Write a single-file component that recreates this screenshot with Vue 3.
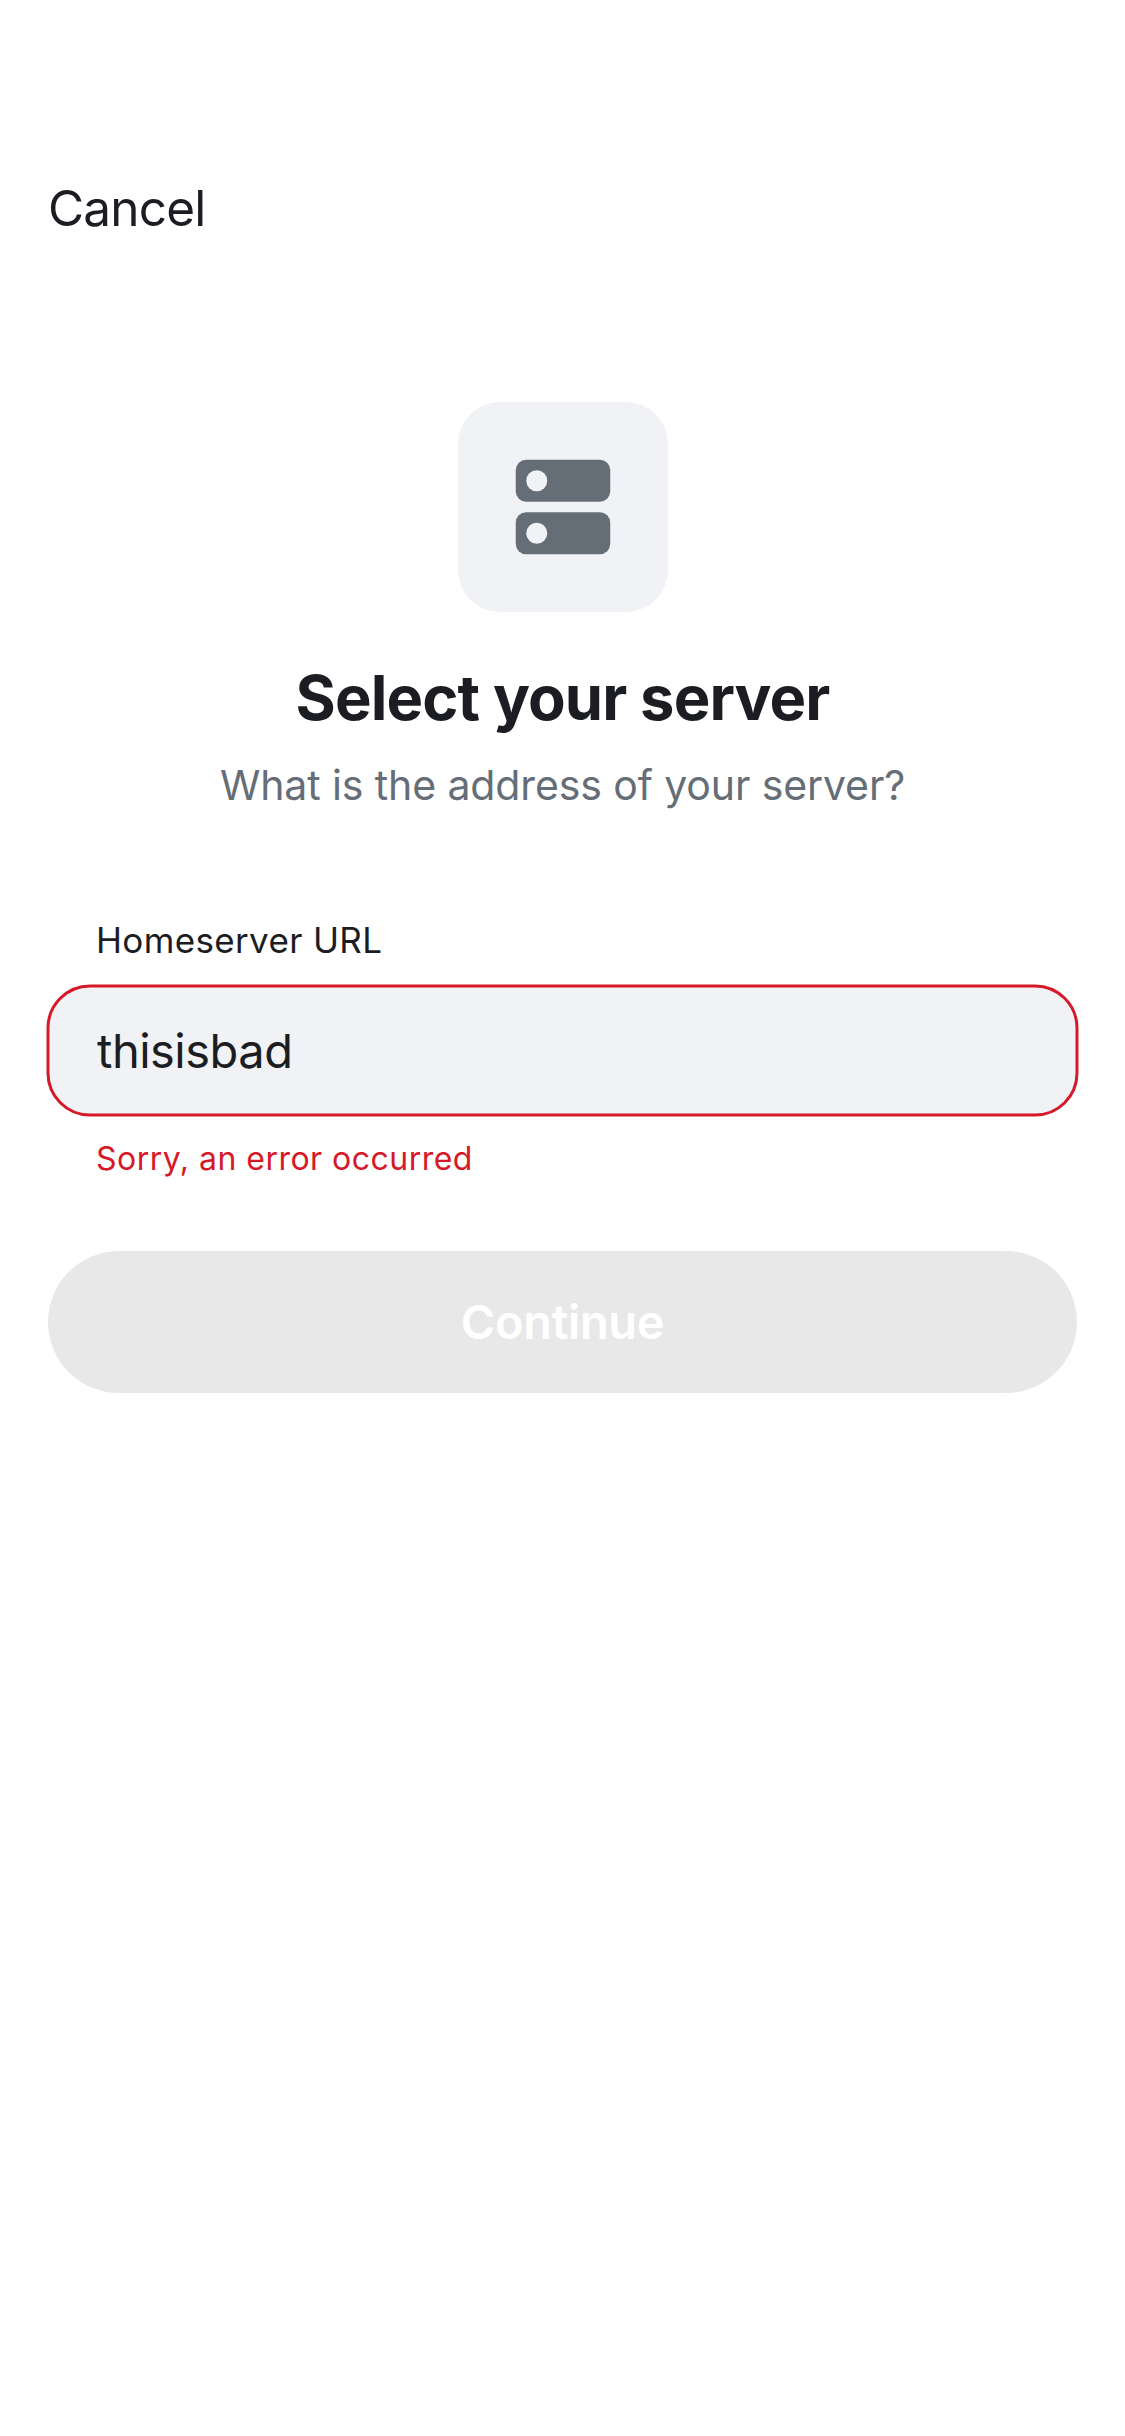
<script setup>
import { ref } from 'vue'

const address = ref('thisisbad')
</script>

<template>
  <main class="screen">
    <nav class="toolbar"><button class="cancel">Cancel</button></nav>
    <header class="header">
      <div class="tile">
        <svg width="96" height="96" viewBox="0 0 96 96" aria-hidden="true">
          <rect x="0.75" y="0.75" width="94.5" height="42" rx="10.5" fill="#656d77" />
          <rect x="0.75" y="53.25" width="94.5" height="42" rx="10.5" fill="#656d77" />
          <circle cx="21.75" cy="21.75" r="10.5" fill="#f0f2f5" />
          <circle cx="21.75" cy="74.25" r="10.5" fill="#f0f2f5" />
        </svg>
      </div>
      <h1>Select your server</h1>
      <p>What is the address of your server?</p>
    </header>
    <section class="form">
      <label>Homeserver URL</label>
      <div class="field">
        <svg class="outline" width="1029" height="129" aria-hidden="true">
          <rect width="1029" height="129" rx="42" fill="#f0f2f5" stroke="#d51928" stroke-width="3" />
        </svg>
        <span class="value">{{ address }}</span>
      </div>
      <div class="error">Sorry, an error occurred</div>
      <button class="continue" disabled>Continue</button>
    </section>
  </main>
</template>

<style>
body { margin: 0; background: #fff; }
</style>

<style scoped>
.screen { box-sizing: border-box; width: 1125px; height: 2436px; padding: 132px 48px 0; background: #fff; font-family: Inter, sans-serif; color: #1b1d22; overflow: hidden; }
button { border: 0; padding: 0; font-family: inherit; }
.toolbar { height: 152px; display: flex; align-items: center; }
.cancel { background: none; color: #1b1d22; font-size: 49.5px; letter-spacing: -0.8px; line-height: 66px; }
.header { padding-top: 118px; display: flex; flex-direction: column; align-items: center; }
.tile { width: 210px; height: 210px; border-radius: 42px; background: #f0f2f5; display: flex; align-items: center; justify-content: center; }
h1, p { margin: 0; white-space: nowrap; }
h1 { margin-top: 47px; font-size: 61.5px; line-height: 78px; font-weight: 700; letter-spacing: -0.87px; }
p { margin-top: 18px; font-size: 41px; line-height: 60px; letter-spacing: -0.11px; color: #656d77; }
.form { display: flex; flex-direction: column; padding-top: 101px; }
label { padding-left: 48px; font-size: 35px; line-height: 48px; letter-spacing: 0.35px; }
.field { position: relative; box-sizing: border-box; margin-top: 22px; height: 129px; padding-left: 49px; display: flex; align-items: center; font-size: 47px; letter-spacing: -0.5px; }
.outline { position: absolute; inset: 0; overflow: visible; }
.value { position: relative; }
.error { padding: 21px 0 0 48px; font-size: 32px; line-height: 45px; letter-spacing: 0.48px; color: #d51928; }
.continue { margin-top: 70px; height: 142px; padding-bottom: 2px; border-radius: 71px; background: #e8e8e8; color: #fff; font-size: 47px; font-weight: 600; letter-spacing: -0.35px; }
</style>
